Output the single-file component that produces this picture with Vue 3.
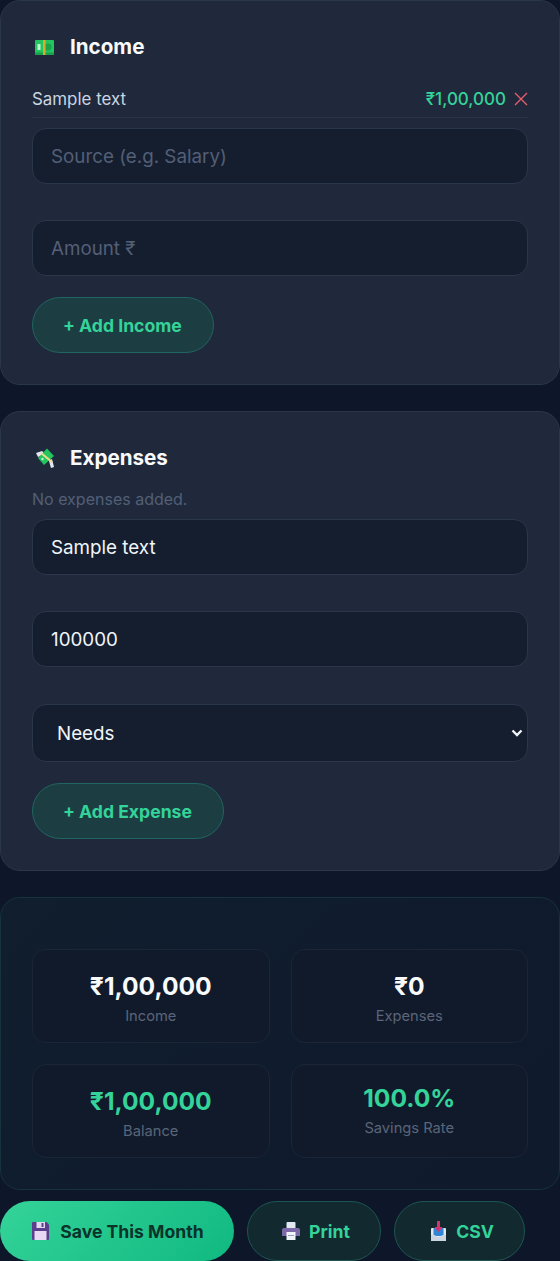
<script setup>
const stats = [
  { value: '₹1,00,000', label: 'Income', cls: '' },
  { value: '₹0', label: 'Expenses', cls: '' },
  { value: '₹1,00,000', label: 'Balance', cls: 'green' },
  { value: '100.0%', label: 'Savings Rate', cls: 'green up' },
]
</script>

<template>
  <main class="page">
    <section class="card">
      <h2>
        <svg class="emoji" viewBox="0 0 20 20">
          <rect x="1" y="3" width="19" height="15" rx="1" fill="#22c55e" />
          <rect x="1" y="15.5" width="19" height="2.5" fill="#16a34a" />
          <rect x="3.5" y="7" width="3" height="6" fill="#bbf7d0" />
          <circle cx="14" cy="10" r="3.5" fill="#16a34a" />
          <rect x="9" y="3" width="2.5" height="15" fill="#e0a82e" />
        </svg>
        <span>Income</span>
      </h2>
      <div class="row">
        <span>Sample text</span>
        <span class="row-right">
          <span class="amount">₹1,00,000</span>
          <svg class="cross" viewBox="0 0 14 14">
            <path d="M1 1 L13 13 M13 1 L1 13" stroke="#e35d6a" stroke-width="1.4" fill="none" />
          </svg>
        </span>
      </div>
      <input class="field" placeholder="Source (e.g. Salary)" />
      <input class="field" placeholder="Amount ₹" />
      <button class="add">+ Add Income</button>
    </section>

    <section class="card">
      <h2>
        <svg class="emoji" viewBox="0 0 20 20">
          <path d="M2 5 L8 3 L11 6 L4 9 Z" fill="#e2e8f0" />
          <path d="M15 13 L18 11 L20 19 L17 20 Z" fill="#e2e8f0" />
          <path d="M13 0.5 L20 8 L10 17 L4 10 Z" fill="#22c55e" />
          <path d="M7 5 L18 14" stroke="#eddc8a" stroke-width="2.2" fill="none" />
          <circle cx="8.5" cy="11" r="1.2" fill="#bbf7d0" />
        </svg>
        <span>Expenses</span>
      </h2>
      <p class="empty">No expenses added.</p>
      <input class="field" value="Sample text" />
      <input class="field" value="100000" />
      <select class="field select">
        <option>Needs</option>
        <option>Wants</option>
        <option>Savings</option>
      </select>
      <button class="add">+ Add Expense</button>
    </section>

    <section class="summary">
      <div v-for="s in stats" :key="s.label" class="stat">
        <div class="value" :class="s.cls">{{ s.value }}</div>
        <div class="label">{{ s.label }}</div>
      </div>
    </section>

    <div class="actions">
      <button class="btn primary">
        <svg class="emoji-sm" viewBox="0 0 20 20">
          <path d="M0 2 Q0 1 1 1 H14.5 L17 3.5 V18 Q17 19 16 19 H1 Q0 19 0 18 Z" fill="#5b3f8c" />
          <rect x="4.5" y="1" width="8.5" height="6" fill="#e2d9f0" />
          <rect x="9.5" y="2" width="2" height="4" fill="#5b3f8c" />
          <rect x="2.5" y="10" width="12" height="9" fill="#e9d8f4" />
        </svg>
        <span>Save This Month</span>
      </button>
      <button class="btn ghost">
        <svg class="emoji-sm" viewBox="0 0 20 20">
          <rect x="5.5" y="1" width="9" height="7" rx="1" fill="#e2e8f0" />
          <path d="M1 9 Q1 7 3 7 H17 Q19 7 19 9 V15 H1 Z" fill="#7c6aa8" />
          <rect x="5.5" y="11" width="9" height="8" fill="#f1f5f9" />
          <rect x="7" y="14" width="6" height="1" fill="#94a3b8" />
        </svg>
        <span>Print</span>
      </button>
      <button class="btn ghost">
        <svg class="emoji-sm" viewBox="0 0 20 20">
          <rect x="3" y="7" width="15" height="13" rx="1" fill="#e2e8f0" />
          <rect x="5.5" y="7" width="10" height="8" fill="#2f86d6" />
          <path d="M3 14 H7 L8.5 16 H12.5 L14 14 H18 V20 H3 Z" fill="#cbd5e1" />
          <path d="M9 0 H12 V6 H14.5 L10.5 11 L6.5 6 H9 Z" fill="#d6336c" />
        </svg>
        <span>CSV</span>
      </button>
    </div>
  </main>
</template>

<style scoped>
.page {
  display: flex;
  flex-direction: column;
  font-family: Inter, "Noto Sans", sans-serif;
  color: #fff;
}

.card {
  display: flex;
  flex-direction: column;
  background: #1f293b;
  border: 1px solid #2a3649;
  border-radius: 20px;
  padding: 31px;
  margin-bottom: 26px;
}

h2 {
  display: flex;
  align-items: center;
  gap: 16px;
  margin: 0 0 16px;
  padding-left: 2px;
  font-size: 20.6px;
  line-height: 30px;
  font-weight: 700;
  color: #f8fafc;
}

.emoji {
  width: 20px;
  height: 20px;
}

.row {
  display: flex;
  justify-content: space-between;
  align-items: center;
  height: 37px;
  padding-top: 2px;
  margin-bottom: 10px;
  border-bottom: 1px solid #283448;
  font-size: 16.9px;
  color: #cbd5e1;
}

.row-right {
  display: flex;
  align-items: center;
  gap: 8px;
}

.amount {
  color: #34d399;
  font-weight: 500;
  font-size: 17px;
}

.cross {
  width: 14px;
  height: 14px;
}

.field {
  box-sizing: border-box;
  width: 100%;
  height: 56px;
  margin: 0 0 36px;
  padding: 0 18px;
  background: #151e2f;
  border: 1px solid #2a3649;
  border-radius: 14px;
  font-family: inherit;
  font-size: 18.8px;
  color: #f1f5f9;
  outline: none;
}

.field::placeholder {
  color: #535f76;
}

.select {
  appearance: none;
  height: 58px;
  margin: 1px 0 21px;
  padding-left: 24px;
  background-image: url("data:image/svg+xml,%3Csvg xmlns='http://www.w3.org/2000/svg' viewBox='0 0 12 8'%3E%3Cpath d='M1.5 1.5 L6 6 L10.5 1.5' stroke='%23f1f5f9' stroke-width='2.4' fill='none'/%3E%3C/svg%3E");
  background-repeat: no-repeat;
  background-position: right 4px center;
  background-size: 12px 8px;
}

.add {
  align-self: flex-start;
  height: 56px;
  padding: 0 31px 0 30px;
  margin-top: -15px;
  background: #1c3e42;
  border: 1px solid #1f6560;
  border-radius: 28px;
  font-family: inherit;
  font-size: 17.6px;
  font-weight: 700;
  color: #34d399;
}

.select + .add {
  margin-top: 0;
}

.empty {
  margin: 0 0 10px;
  font-size: 16px;
  line-height: 20px;
  color: #535f76;
}

.summary {
  display: grid;
  grid-template-columns: 1fr 1fr;
  gap: 21px;
  padding: 51px 31px 31px;
  background: linear-gradient(135deg, #101e2e, #0f1a2c);
  border: 1px solid #16323a;
  border-radius: 20px;
  margin-bottom: 11px;
}

.stat {
  height: 94px;
  box-sizing: border-box;
  padding-top: 20px;
  text-align: center;
  background: #111a2b;
  border: 1px solid #1a2536;
  border-radius: 14px;
}

.value {
  font-size: 24.6px;
  line-height: 32px;
  font-weight: 700;
  color: #f8fafc;
}

.value.green {
  color: #34d399;
}

.value.up {
  margin-top: -3px;
}

.label {
  margin-top: 4px;
  font-size: 14.7px;
  line-height: 20px;
  color: #5a6579;
}

.actions {
  display: flex;
  gap: 13px;
}

.btn {
  display: flex;
  align-items: center;
  justify-content: center;
  gap: 8px;
  height: 60px;
  padding: 0;
  border-radius: 30px;
  font-family: inherit;
  font-size: 17.6px;
  font-weight: 700;
}

.emoji-sm {
  width: 20px;
  height: 20px;
}

.primary {
  width: 234px;
  padding-left: 2px;
  background: linear-gradient(135deg, #34d399, #10b981);
  border: none;
  color: #0a3329;
}

.ghost {
  width: 134px;
  padding-left: 3px;
  background: #11292f;
  border: 1px solid #1d5650;
  color: #34d399;
}

.ghost:last-child {
  width: 131px;
}
</style>

<style>
html,
body {
  background: #0e172a;
  overflow: hidden;
}
</style>
